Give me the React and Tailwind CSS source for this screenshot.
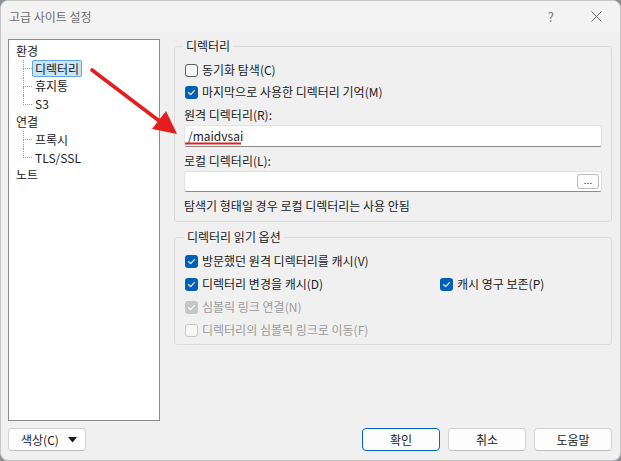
import React from 'react';

const font = "font-['Noto_Sans_CJK_KR','Noto_Sans',sans-serif]";

function CheckBox({ checked, disabled }) {
    if (checked) {
        return (
            <span className={`flex h-[13px] w-[13px] shrink-0 items-center justify-center rounded-[3px] ${disabled ? 'bg-[#c6c6c6]' : 'bg-[#005fb8]'}`}>
                <svg width="13" height="13" viewBox="0 0 13 13">
                    <path d="M3.6 6.7 L5.6 8.6 L9.4 4.6" fill="none" stroke="white" strokeWidth="1.2" strokeLinecap="round" strokeLinejoin="round" />
                </svg>
            </span>
        );
    }
    return (
        <span className={`h-[13px] w-[13px] shrink-0 rounded-[3px] border ${disabled ? 'border-[#c9c9c9] bg-[#f7f7f7]' : 'border-[#5c5c5c] bg-[#f7f7f7]'}`} />
    );
}

function Check({ label, checked, disabled, className = '' }) {
    return (
        <div className={`flex h-[20px] items-center gap-[4px] ${className}`}>
            <CheckBox checked={checked} disabled={disabled} />
            <span className={disabled ? 'text-[#9b9b9b]' : 'text-[#1b1b1b]'}>{label}</span>
        </div>
    );
}

function TreeChild({ label, selected, last }) {
    return (
        <div className="flex h-[17.8px] items-stretch">
            <div className="ml-[14px] flex w-[9px] flex-col">
                <div className="flex-1 border-b border-l border-dotted border-[#9a9a9a]" />
                <div className={`flex-1 ${last ? '' : 'border-l border-dotted border-[#9a9a9a]'}`} />
            </div>
            <div className="flex items-center">
                <span
                    className={`flex h-[17px] items-center rounded-[2px] border px-[2px] leading-none ${
                        selected ? 'border-[#5fa6e0] bg-[#cce4f7]' : 'border-transparent'
                    }`}
                >
                    {label}
                </span>
            </div>
        </div>
    );
}

function TreeRoot({ label }) {
    return <div className="flex h-[17.8px] items-center pl-[7px]">{label}</div>;
}

function Button({ children, primary, className = '' }) {
    return (
        <button
            className={`flex h-[23px] w-[78px] items-center justify-center rounded-[4px] border bg-[#fdfdfd] text-[12px] text-[#1b1b1b] ${
                primary ? 'border-[#0067c0]' : 'border-[#d3d3d3] border-b-[#bdbdbd]'
            } ${className}`}
        >
            {children}
        </button>
    );
}

export default function App() {
    return (
        <div className={`h-[461px] w-[621px] bg-[#8d8f93] ${font} text-[12px] leading-[14px]`}>
            <div className="relative flex h-full w-full flex-col overflow-hidden rounded-[8px] border border-[#c4c4c4] bg-[#f0f0f0]">
                {/* Title bar */}
                <div className="flex h-[31px] shrink-0 items-center bg-[#f3f3f3] pl-[8px] text-[#6e6e6e]">
                    <span className="flex-1">고급 사이트 설정</span>
                    <span className="mr-[37px] text-[13px] text-[#7a7a7a]">?</span>
                    <svg className="mr-[18px]" width="11" height="11" viewBox="0 0 11 11">
                        <path d="M0.5 0.5 L10.5 10.5 M10.5 0.5 L0.5 10.5" stroke="#6e6e6e" strokeWidth="1" />
                    </svg>
                </div>

                {/* Body */}
                <div className="flex flex-1 flex-col pb-[9px] pl-[7px] pr-[8px] pt-[7px]">
                    <div className="flex flex-1 gap-[14px]">
                        {/* Category tree */}
                        <div className="w-[152px] border border-[#8c8c8c] bg-white pt-[2px] text-[#1b1b1b]">
                            <TreeRoot label="환경" />
                            <TreeChild label="디렉터리" selected />
                            <TreeChild label="휴지통" />
                            <TreeChild label="S3" last />
                            <TreeRoot label="연결" />
                            <TreeChild label="프록시" />
                            <TreeChild label="TLS/SSL" last />
                            <TreeRoot label="노트" />
                        </div>

                        {/* Settings page */}
                        <div className="flex flex-1 flex-col">
                            <fieldset className="rounded-[3px] border border-[#dcdcdc] px-[9px] pb-[5px] pt-[7px]">
                                <legend className="ml-[-1px] px-[3px] text-[#1b1b1b]">디렉터리</legend>
                                <Check className="ml-[1px]" label="동기화 탐색(C)" />
                                <Check className="ml-[1px] mt-[2px]" label="마지막으로 사용한 디렉터리 기억(M)" checked />
                                <div className="mt-[3px] flex h-[20px] items-center text-[#1b1b1b]">원격 디렉터리(R):</div>
                                <div className="flex h-[22px] items-center rounded-[3px] border border-[#e2e2e2] border-b-[#8a8a8a] bg-white pl-[3px] text-[#1b1b1b]">
                                    /maidvsai
                                </div>
                                <div className="mt-[4px] flex h-[20px] items-center text-[#1b1b1b]">로컬 디렉터리(L):</div>
                                <div className="flex h-[21px] items-center justify-end rounded-[3px] border border-[#e2e2e2] border-b-[#8a8a8a] bg-white pr-[2px]">
                                    <span className="flex h-[15px] w-[22px] items-center justify-center rounded-[3px] border border-[#bcbcbc] bg-[#fbfbfb] pb-[3px] text-[10px] text-[#1b1b1b]">
                                        ...
                                    </span>
                                </div>
                                <div className="mt-[4px] flex h-[20px] items-center text-[#1b1b1b]">
                                    탐색기 형태일 경우 로컬 디렉터리는 사용 안됨
                                </div>
                            </fieldset>

                            <fieldset className="mt-[8px] rounded-[3px] border border-[#dcdcdc] px-[10px] pb-[4px] pt-[7px]">
                                <legend className="ml-[-1px] px-[3px] text-[#1b1b1b]">디렉터리 읽기 옵션</legend>
                                <Check label="방문했던 원격 디렉터리를 캐시(V)" checked />
                                <div className="mt-[3px] flex">
                                    <Check className="w-[255px]" label="디렉터리 변경을 캐시(D)" checked />
                                    <Check label="캐시 영구 보존(P)" checked />
                                </div>
                                <Check className="mt-[3px]" label="심볼릭 링크 연결(N)" checked disabled />
                                <Check className="mt-[3px]" label="디렉터리의 심볼릭 링크로 이동(F)" disabled />
                            </fieldset>
                        </div>
                    </div>

                    {/* Dialog buttons */}
                    <div className="mt-[7px] flex items-center">
                        <button className="flex h-[23px] w-[78px] items-center rounded-[4px] border border-[#d3d3d3] border-b-[#bdbdbd] bg-[#fdfdfd] pl-[12px] text-[12px] text-[#1b1b1b]">
                            <span className="flex-1 text-left">색상(C)</span>
                            <svg className="mr-[8px]" width="9" height="6" viewBox="0 0 9 6">
                                <path d="M0 0 H9 L4.5 5.5 Z" fill="#1b1b1b" />
                            </svg>
                        </button>
                        <div className="flex-1" />
                        <Button primary>확인</Button>
                        <Button className="ml-[8px]">취소</Button>
                        <Button className="ml-[8px]">도움말</Button>
                    </div>
                </div>

                {/* Red annotation: arrow and underline */}
                <svg className="pointer-events-none absolute left-[-1px] top-[-1px]" width="621" height="461" viewBox="0 0 621 461">
                    <line x1="92" y1="70" x2="160" y2="121.5" stroke="#e41e1e" strokeWidth="3.6" strokeLinecap="round" />
                    <polygon points="177,134 152,129 166,111" fill="#e41e1e" />
                    <line x1="185" y1="143.5" x2="241" y2="143.5" stroke="#e41e1e" strokeWidth="2" />
                </svg>
            </div>
        </div>
    );
}
